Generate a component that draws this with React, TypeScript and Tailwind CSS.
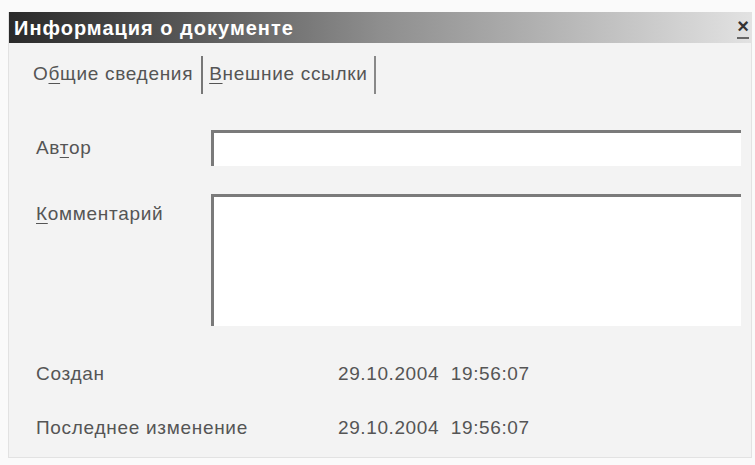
import React from "react";

function Underlined({ pre, key1, post }: { pre: string; key1: string; post: string }) {
  return (
    <span>
      {pre}
      <span className="underline underline-offset-[3px]">{key1}</span>
      {post}
    </span>
  );
}

export default function App() {
  return (
    <div
      className="w-[755px] h-[465px] bg-[#fafafa] pt-[12px] pl-[8px] pr-[3px] overflow-hidden text-[#555]"
      style={{ fontFamily: '"Liberation Sans", Arial, sans-serif' }}
    >
      <div className="h-[446px] bg-[#f3f3f3] border-l border-r border-b border-[#e2e2e2] flex flex-col text-[19px] tracking-[0.7px]">
        {/* title bar */}
        <div className="h-[31px] flex items-center justify-between bg-gradient-to-r from-[#2a2a2a] via-[#8e8e8e] to-[#e2e2e2] pl-[5px] pr-[2px]">
          <span className="text-white font-bold text-[20px] tracking-[1px]">Информация о документе</span>
          <span className="text-[#333] font-bold text-[20px] leading-none border-b-2 border-[#666] pb-[1px] tracking-normal">×</span>
        </div>

        {/* tabs */}
        <div className="h-[55px] flex items-center pl-[24px] pt-[8px]">
          <span className="pr-[8px]">
            <Underlined pre="О" key1="б" post="щие сведения" />
          </span>
          <span className="w-[2px] h-[38px] bg-[#777]" />
          <span className="px-[6px]">
            <Underlined pre="" key1="В" post="нешние ссылки" />
          </span>
          <span className="w-[2px] h-[38px] bg-[#888]" />
        </div>

        {/* author */}
        <div className="flex items-center mt-[32px]">
          <div className="w-[202px] pl-[27px]">
            <Underlined pre="Ав" key1="т" post="ор" />
          </div>
          <div className="w-[530px] h-[36px] bg-white border-t-[3px] border-l-[3px] border-[#7a7a7a]" />
        </div>

        {/* comment */}
        <div className="flex items-start mt-[28px]">
          <div className="w-[202px] pl-[27px] pt-[6px]">
            <Underlined pre="" key1="К" post="омментарий" />
          </div>
          <div className="w-[530px] h-[132px] bg-white border-t-[3px] border-l-[3px] border-[#7a7a7a]" />
        </div>

        {/* dates */}
        <div className="flex items-center mt-[36px] h-[24px] tracking-[0.6px]">
          <div className="w-[329px] pl-[27px] tracking-[0.7px]">Создан</div>
          <div>29.10.2004&nbsp;&nbsp;19:56:07</div>
        </div>
        <div className="flex items-center mt-[30px] h-[24px] tracking-[0.6px]">
          <div className="w-[329px] pl-[27px] tracking-[0.7px]">Последнее изменение</div>
          <div>29.10.2004&nbsp;&nbsp;19:56:07</div>
        </div>
      </div>
    </div>
  );
}
